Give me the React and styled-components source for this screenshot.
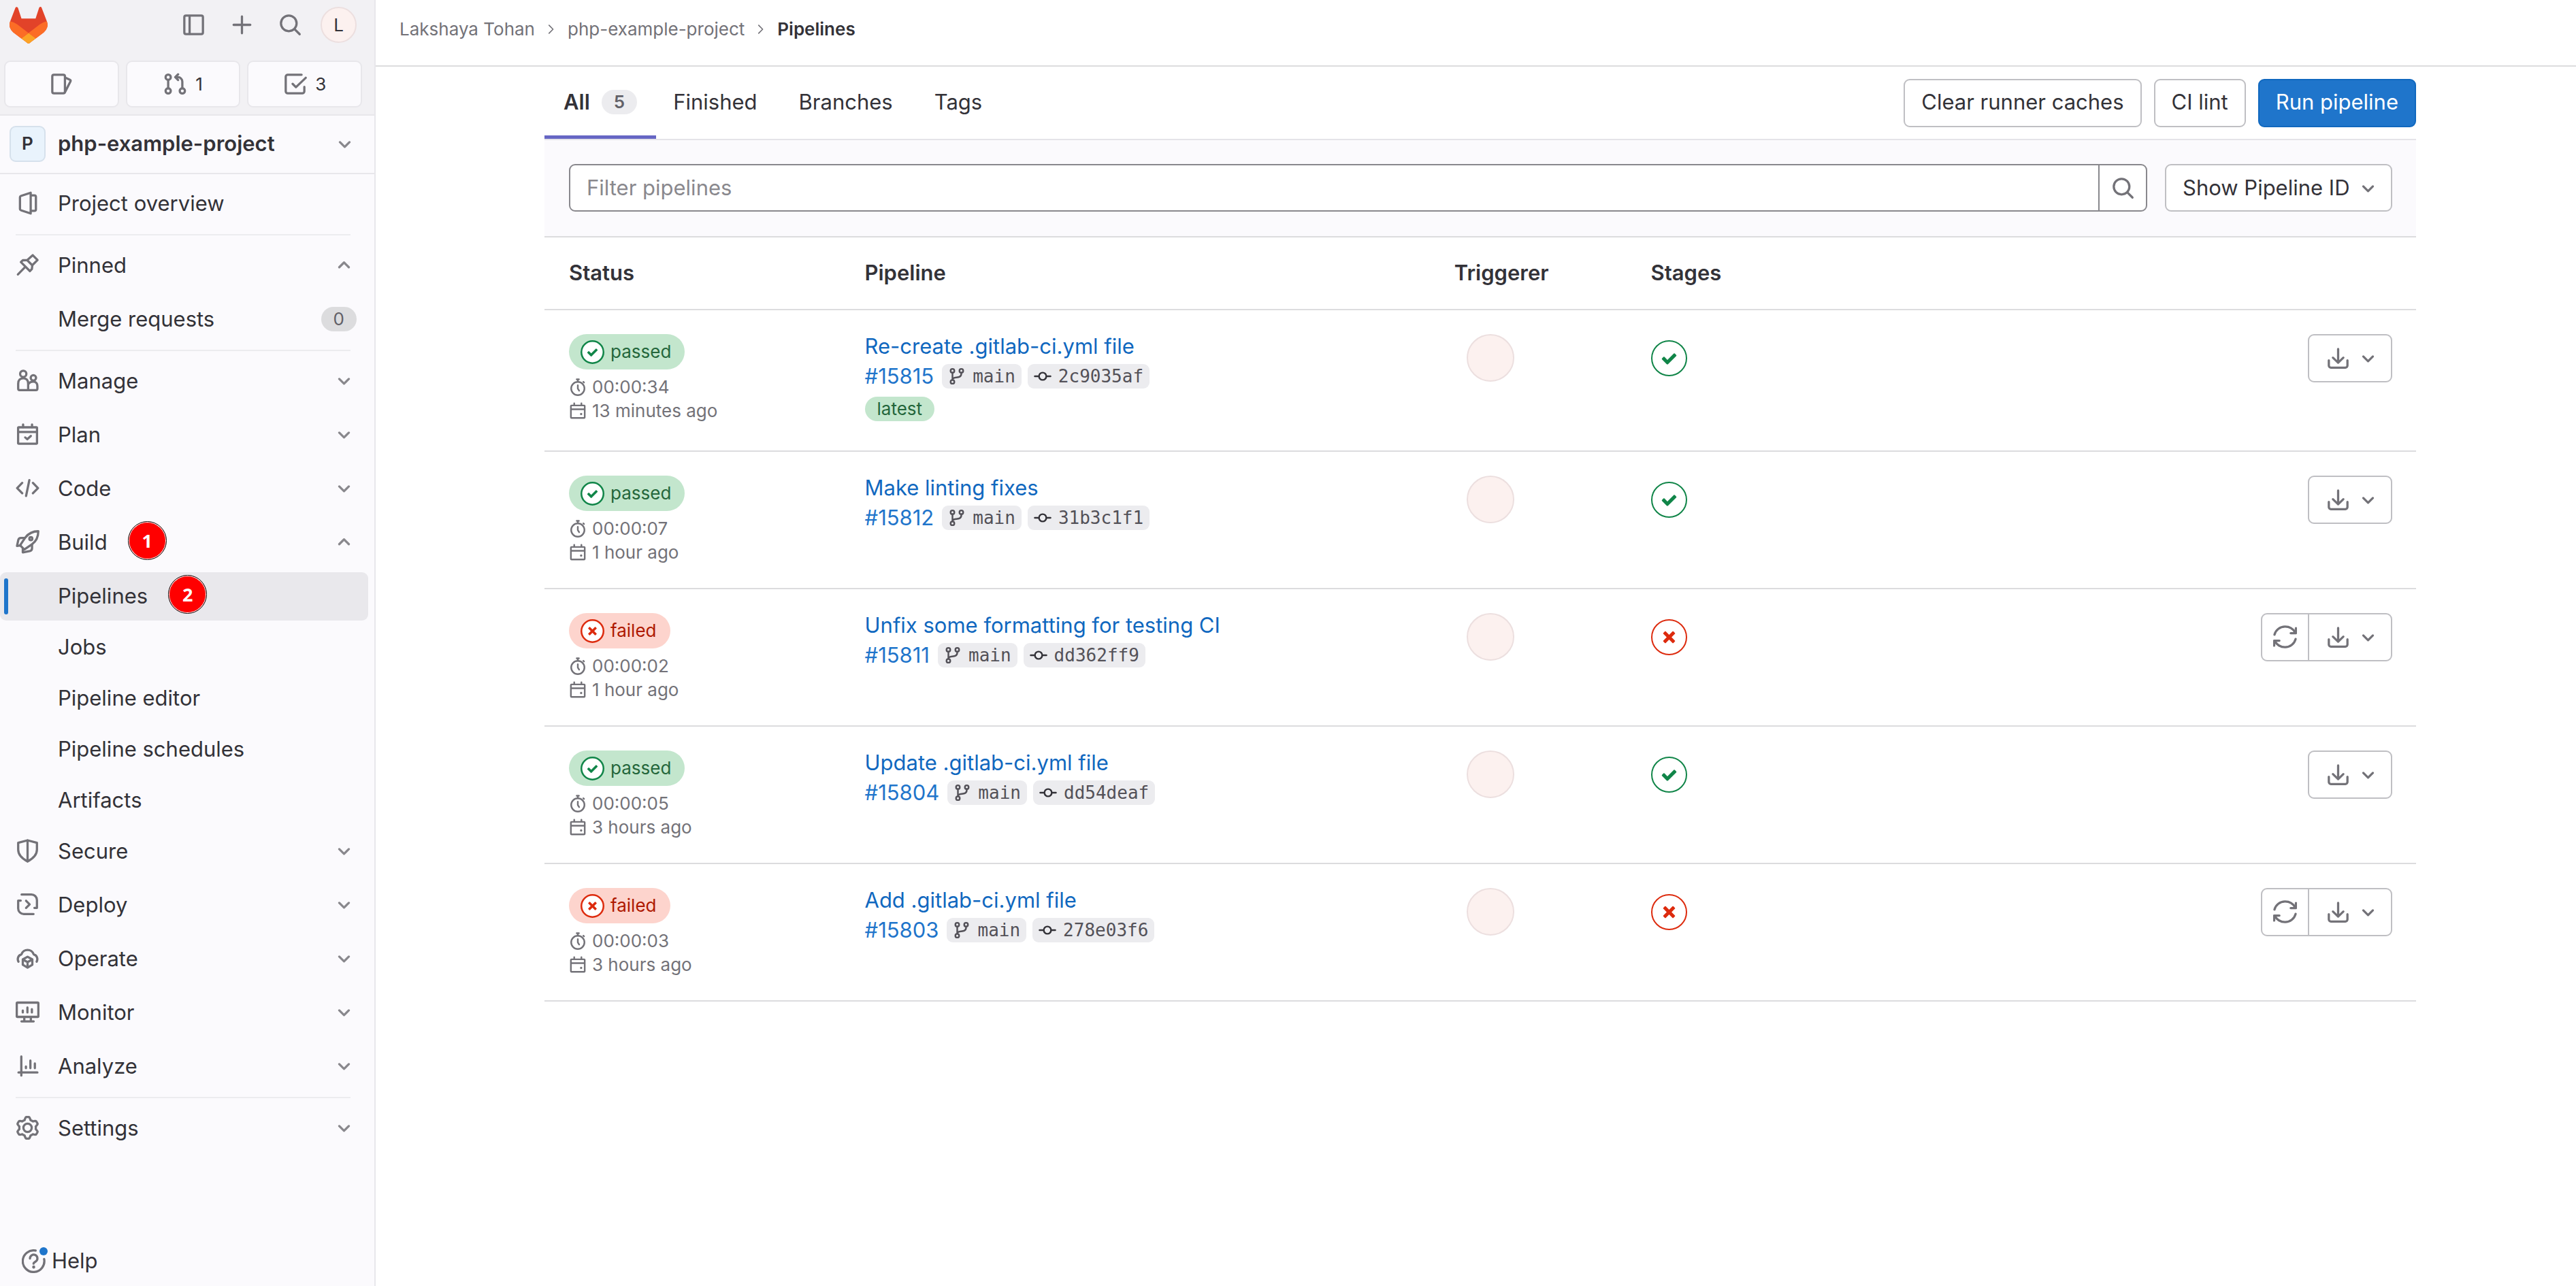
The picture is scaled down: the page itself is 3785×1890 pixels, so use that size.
import React from "react";
import styled, { createGlobalStyle, css } from "styled-components";

const GlobalStyle = createGlobalStyle`
  *, *::before, *::after { box-sizing: border-box; }
  body {
    margin: 0;
    background: #fff;
    color: #333238;
    font-family: Inter, "Open Sans", sans-serif;
    font-size: 31px;
    line-height: 36px;
  }
  button, input, select { font: inherit; color: inherit; margin: 0; }
  button, select { cursor: pointer; }
  a { text-decoration: none; }
  ul, ol { list-style: none; margin: 0; padding: 0; }
`;

/* ---------- Icons ---------- */

const Svg = styled.svg`
  display: block;
  flex: none;
  width: ${(p) => p.$size || 35}px;
  height: ${(p) => p.$size || 35}px;
  color: ${(p) => p.$color || "#737278"};
  fill: none;
  stroke: currentColor;
  stroke-width: ${(p) => p.$stroke || 1.5};
  stroke-linecap: round;
  stroke-linejoin: round;
`;

const gear = Array.from({ length: 120 }, (_, i) => {
  const a = (i / 120) * Math.PI * 2;
  const wave = Math.max(-1, Math.min(1, 1.7 * Math.cos(6 * a)));
  const r = 6.4 + 0.85 * wave;
  return `${(8 + r * Math.sin(a)).toFixed(2)} ${(8 - r * Math.cos(a)).toFixed(2)}`;
}).join("L");

const shapes = {
  sidebar: <><rect x="1.75" y="1.75" width="12.5" height="12.5" rx="1.1" /><path d="M5.3 2v12" /></>,
  plus: <path d="M8 2.4v11.2M2.4 8h11.2" />,
  search: <><circle cx="7" cy="7" r="5.25" /><path d="M10.9 10.9l3.4 3.4" /></>,
  issues: <><rect x="1.75" y="1.75" width="8.5" height="12.5" rx="1.1" /><path d="M10.4 3.7l3.2 1.4a.8.8 0 0 1 .4 1.1l-3.6 7" /></>,
  merge: <><circle cx="3.25" cy="3.4" r="1.75" /><circle cx="3.25" cy="12.6" r="1.75" /><circle cx="12.75" cy="12.6" r="1.75" /><path d="M3.25 5.2v5.6M12.75 10.8V6.4a3 3 0 0 0-3-3H8.2M9.9 1.5L8 3.4l1.9 1.9" /></>,
  todo: <><path d="M12.4 1.75H3.1c-.7 0-1.35.6-1.35 1.35v9.8c0 .7.6 1.35 1.35 1.35h9.8c.7 0 1.35-.6 1.35-1.35v-3" /><path d="M6.4 7.9l2.2 2.2 6.6-6.3" /></>,
  project: <><path d="M10.1 1L3.5 3.2a.9.9 0 0 0-.6.8v8c0 .4.2.7.6.8l6.6 2.2z" /><path d="M10.3 2.8h2.3a1 1 0 0 1 1 1v8.4a1 1 0 0 1-1 1h-2.3" /></>,
  pin: <><path d="M11.5 1.4l3.2 3.2-3.5 3.5-.3 2.6-1.3 1.4L3.5 6l1.3-1.2 3-.1z" /><path d="M7.9 4.9L11 8M6.4 9.3l-4.9 5" /></>,
  users: <><circle cx="5.1" cy="3.4" r="2.1" /><path d="M5.1 6.3c2.1 0 3.3 1.4 3.3 3.6v4.4H2.6c-.6 0-.9-.3-.9-.9V9.9c0-2.2 1.3-3.6 3.4-3.6z" /><circle cx="11.9" cy="6.1" r="1.8" /><path d="M8.9 9.9c.5-.8 1.5-1.3 2.8-1.3 1.9 0 2.9 1.2 2.9 2.9v1.9c0 .6-.3.9-.9.9H8.6" /></>,
  calendar: <><rect x="1.65" y="3.2" width="12.7" height="11" rx=".5" /><path d="M1.8 6.3h12.4M5 1.3v1.8M11 1.3v1.8M6.4 10l1.4 1.2L10.2 9" /></>,
  code: <path d="M4.4 4.4L1 7.9l3.4 3.5M11.6 4.4L15 7.9l-3.4 3.5M9.2 2.6L7 13.2" />,
  rocket: <><path d="M15.2.8c-3.6 0-6.6 1.5-8.7 4.2L3 10.2l2.8 2.9L11 9.5c2.8-2 4.2-5 4.2-8.7z" /><path d="M6.3 5.3H3.5c-1 0-1.5.5-1.7 1.3L.9 10.7l2.4-.4M11 9.7v2.5c0 1-.6 1.7-1.5 1.9l-4.7.9V12.6" /><circle cx="10.2" cy="5.8" r="1" /></>,
  shield: <><path d="M8 .9l6.3 1.7v4.6c0 3.3-2.3 5.8-6.3 7.9-4-2.1-6.3-4.6-6.3-7.9V2.6z" /><path d="M8 1v14" /></>,
  deploy: <><path d="M4 1.2h6.6a3.7 3.7 0 0 1 3.7 3.7v5.3h-1.7" /><path d="M12 14.3H5.4a3.7 3.7 0 0 1-3.7-3.7V5.3h1.7" /><path d="M7 5.4l2.4 2.4L7 10.2" /></>,
  operate: <><path d="M1.9 10.2A3.3 3.3 0 0 1 3.9 5.3a4.3 4.3 0 0 1 8.2 0 3.3 3.3 0 0 1 2 4.9" /><path d="M8 6.9l3.2 1.8v3.6L8 14.2l-3.2-1.9V8.7zM4.9 8.8L8 10.5l3.1-1.7M8 10.5v3.5" /></>,
  monitor: <><rect x=".75" y="1.6" width="14.5" height="9.6" rx=".5" /><path d="M4.8 6.9v1.3M7.9 4.9v3.3M10.9 6v2.2M5.8 11.4v2.4M10.2 11.4v2.4M3.9 14.2h8.2" /></>,
  analyze: <path d="M3.8 1.7v12.8M1.9 12.4h12.7M6.9 8.4v1.1M9.9 4.4v5.1M12.9 6.4v3.1" />,
  settings: <><path d={`M${gear}Z`} /><circle cx="8" cy="8" r="2.8" /></>,
  help: <><path d="M9.3.9A7.25 7.25 0 1 0 15 6.6" /><path d="M5.5 6.2a2.5 2.5 0 1 1 3.9 2L8.3 9a.9.9 0 0 0-.4.7" /><path d="M8 11.9v.1" strokeWidth="2" /></>,
  down: <path d="M4.8 6.8L8 10l3.2-3.2" />,
  up: <path d="M4.8 9.5L8 6.3l3.2 3.2" />,
  crumb: <path d="M6 4.4L9.6 8 6 11.6" />,
  timer: <><circle cx="8" cy="9.2" r="6" /><path d="M7 .9h2M8 1v2M13 3.2l.6.6M8 6.3v3l1.2 1.9" /></>,
  date: <><rect x="1.75" y="3" width="12.5" height="11.3" rx=".6" /><path d="M2 6.5h12M4.75 1v2M11.25 1v2" /><path d="M11 10.7v.1" strokeWidth="2" /></>,
  branch: <><circle cx="4" cy="3" r="1.7" /><circle cx="12" cy="3" r="1.7" /><circle cx="4" cy="13" r="1.7" /><path d="M4 4.8v6.4M12 4.8v.7c0 3.2-2.4 3.4-4.5 3.6C5.6 9.3 4 9.6 4 11" /></>,
  commit: <><circle cx="8" cy="8" r="3.3" /><path d="M.9 8h3.5M11.6 8h3.5" /></>,
  retry: <><path d="M.9 6.3C1.7 3.1 4.6.9 8 .9c2.9 0 5.5 1.6 6.8 4" /><path d="M15.3 1.9v3.4h-3.5" /><path d="M15.1 9.2c-.8 3.2-3.7 5.5-7.1 5.5-2.9 0-5.5-1.6-6.8-4" /><path d="M.7 13.7v-3.4h3.5" /></>,
  download: <path d="M8 1.8v9M4.5 7.6L8 11l3.5-3.4M1.75 9.4v3.5c0 .8.6 1.4 1.4 1.4h9.7c.8 0 1.4-.6 1.4-1.4V9.4" />,
};

const Icon = ({ name, size, color, stroke }) => (
  <Svg viewBox="0 0 16 16" aria-hidden="true" $size={size} $color={color} $stroke={stroke}>
    {shapes[name]}
  </Svg>
);

const marks = {
  passed:
    "M6.278 7.697L5.045 6.464a.296.296 0 0 0-.42-.002l-.613.614a.298.298 0 0 0 .002.42l1.91 1.909a.5.5 0 0 0 .703.005l.265-.265L9.997 6.04a.291.291 0 0 0-.009-.408l-.614-.614a.29.29 0 0 0-.408-.009L6.278 7.697z",
  failed:
    "M7 5.969L5.599 4.568a.29.29 0 0 0-.413.004l-.614.614a.294.294 0 0 0-.004.413L5.968 7l-1.4 1.401a.29.29 0 0 0 .004.413l.614.614c.113.114.3.117.413.004L7 8.032l1.401 1.4a.29.29 0 0 0 .413-.004l.614-.614a.294.294 0 0 0 .004-.413L8.032 7l1.4-1.401a.29.29 0 0 0-.004-.413l-.614-.614a.294.294 0 0 0-.413-.004L7 5.968z",
};
const tones = {
  passed: { line: "#108548", fill: "#c3e6cd", text: "#24663b" },
  failed: { line: "#dd2b0e", fill: "#fdd4cd", text: "#ae1800" },
};

const MarkSvg = styled.svg`
  display: block;
  flex: none;
  width: ${(p) => p.$size}px;
  height: ${(p) => p.$size}px;
`;

const StatusMark = ({ status, size, ring }) => (
  <MarkSvg viewBox="0 0 14 14" aria-hidden="true" $size={size}>
    {ring && <circle cx="7" cy="7" r="6.5" fill="#fff" stroke={tones[status].line} />}
    <path d={marks[status]} fill={tones[status].line} />
  </MarkSvg>
);

const LogoSvg = styled.svg`
  display: block;
  width: 56px;
  height: 54px;
`;

const Logo = () => (
  <LogoSvg viewBox="0 0 25 24" role="img" aria-label="GitLab">
    <path fill="#E24329" d="m24.507 9.5-.034-.09L21.082.562a.896.896 0 0 0-1.694.091l-2.29 7.01H7.825L5.535.653a.898.898 0 0 0-1.694-.09L.451 9.411.416 9.5a6.297 6.297 0 0 0 2.09 7.278l.012.01.03.022 5.16 3.867 2.56 1.935 1.554 1.176a1.051 1.051 0 0 0 1.268 0l1.555-1.176 2.56-1.935 5.197-3.89.014-.01A6.297 6.297 0 0 0 24.507 9.5Z" />
    <path fill="#FC6D26" d="m24.507 9.5-.034-.09a11.44 11.44 0 0 0-4.56 2.051l-7.447 5.632 4.742 3.584 5.197-3.89.014-.01A6.297 6.297 0 0 0 24.507 9.5Z" />
    <path fill="#FCA326" d="m7.707 20.677 2.56 1.935 1.555 1.176a1.051 1.051 0 0 0 1.268 0l1.555-1.176 2.56-1.935-4.743-3.584-4.755 3.584Z" />
    <path fill="#FC6D26" d="M5.01 11.461a11.43 11.43 0 0 0-4.56-2.05L.416 9.5a6.297 6.297 0 0 0 2.09 7.278l.012.01.03.022 5.16 3.867 4.745-3.584-7.444-5.632Z" />
  </LogoSvg>
);

/* ---------- Frame ---------- */

const Page = styled.div`
  display: flex;
  min-height: 100vh;
`;

const Sidebar = styled.aside`
  display: flex;
  flex-direction: column;
  flex: none;
  width: 552px;
  background: #fbfafd;
  border-right: 2px solid #e8e7eb;
`;

const Main = styled.main`
  flex: 1;
  min-width: 0;
`;

/* ---------- Sidebar header ---------- */

const SidebarTop = styled.header`
  background: #f2f1f4;
  border-bottom: 2px solid #e8e7eb;
`;

const BrandRow = styled.div`
  display: flex;
  justify-content: space-between;
  align-items: center;
  height: 73px;
  padding: 0 17px 0 14px;
`;

const Tools = styled.div`
  display: flex;
`;

const IconButton = styled.button`
  display: flex;
  align-items: center;
  justify-content: center;
  width: 71px;
  height: 71px;
  padding: 0;
  border: 0;
  background: none;
`;

const avatarBase = css`
  display: flex;
  align-items: center;
  justify-content: center;
  font-size: 26px;
  line-height: 26px;
`;

const UserAvatar = styled.span`
  ${avatarBase}
  width: ${(p) => p.$size}px;
  height: ${(p) => p.$size}px;
  border-radius: 50%;
  border: 2px solid #ecdfdf;
  background: #fcf1ef;
`;

const ProjectAvatar = styled.span`
  ${avatarBase}
  flex: none;
  width: 53px;
  height: 53px;
  border-radius: 9px;
  border: 2px solid #d6e1ec;
  background: #e9f3fc;
  font-weight: 600;
`;

const Counters = styled.div`
  display: flex;
  gap: 10px;
  padding: 16px 18px 10px 6px;
`;

const Counter = styled.a`
  display: flex;
  flex: 1;
  align-items: center;
  justify-content: center;
  gap: 12px;
  height: 69px;
  border: 2px solid #e8e7eb;
  border-radius: 9px;
  background: #fbfafd;
  color: #333238;
  font-size: 26px;
`;

const ProjectButton = styled.button`
  display: flex;
  align-items: center;
  gap: 18px;
  width: 100%;
  height: 86px;
  padding: 0 26px 2px 14px;
  border: 0;
  border-bottom: 2px solid #e8e7eb;
  background: none;
  font-weight: 600;
  text-align: left;
`;

const Grow = styled.span`
  flex: 1;
`;

/* ---------- Sidebar navigation ---------- */

const Nav = styled.nav`
  flex: 1;
  padding-top: 8px;
`;

const rowBase = css`
  display: flex;
  align-items: center;
  width: 100%;
  height: 71px;
  padding: 0 27px 2px 23px;
  border: 0;
  background: none;
  color: #333238;
  text-align: left;
`;

const SectionButton = styled.button`
  ${rowBase}
  gap: 27px;
  margin-bottom: 8px;
`;

const SectionLink = styled.a`
  ${rowBase}
  gap: 27px;
`;

const SubItem = styled.li`
  margin-bottom: 4px;
  padding-right: 9px;
`;

const SubLink = styled.a`
  ${rowBase}
  position: relative;
  padding: 0 17px 2px 85px;
  border-radius: 9px;
  ${(p) =>
    p.$active &&
    css`
      background: #e9e8ec;
      &::before {
        content: "";
        position: absolute;
        left: 6px;
        top: 9px;
        width: 6px;
        height: 53px;
        border-radius: 3px;
        background: #1f75cb;
      }
    `}
`;

const Rule = styled.hr`
  height: 2px;
  margin: 9px 35px 9px 23px;
  border: 0;
  background: #ececef;
`;

const Pill = styled.span`
  display: flex;
  align-items: center;
  justify-content: center;
  min-width: 52px;
  height: 36px;
  padding: 0 18px;
  border-radius: 18px;
  background: ${(p) => p.$fill};
  color: ${(p) => p.$text};
  font-size: 26px;
  font-weight: ${(p) => p.$weight || 400};
  line-height: 36px;
`;

const Callout = styled.span`
  display: flex;
  align-items: center;
  justify-content: center;
  width: 57px;
  height: 57px;
  margin: 0 0 4px 30px;
  border: 1px solid #111;
  border-radius: 50%;
  box-shadow: inset 0 0 0 1px #fff;
  background: #f00;
  color: #fff;
  font: 700 27px/30px "Noto Sans", sans-serif;
`;

const LabelGroup = styled.span`
  display: flex;
  align-items: center;
  flex: 1;
`;

const HelpButton = styled.button`
  display: flex;
  align-items: center;
  gap: 9px;
  height: 72px;
  padding: 0 32px 2px;
  border: 0;
  background: none;
`;

const HelpIcon = styled.span`
  position: relative;
  &::after {
    content: "";
    position: absolute;
    top: -3px;
    right: -3px;
    width: 12px;
    height: 12px;
    border-radius: 50%;
    background: #1f75cb;
  }
`;

/* ---------- Main header ---------- */

const TopBar = styled.nav`
  height: 98px;
  padding: 25px 35px 0;
  border-bottom: 2px solid #dcdcde;
`;

const Crumbs = styled.ol`
  display: flex;
  align-items: center;
  font-size: 26px;
`;

const Crumb = styled.li`
  display: flex;
  align-items: center;
  a { color: ${(p) => (p.$current ? "#333238" : "#737278")}; font-weight: ${(p) => (p.$current ? 600 : 400)}; }
  svg { margin: 0 11px; }
`;

const Content = styled.div`
  padding: 0 32px 0 45px;
`;

const Container = styled.div`
  max-width: 2750px;
  margin: 0 auto;
`;

const TabRow = styled.div`
  display: flex;
  justify-content: space-between;
  align-items: center;
  border-bottom: 2px solid #e4e3e8;
`;

const Tabs = styled.div`
  display: flex;
`;

const Tab = styled.button`
  display: flex;
  align-items: center;
  gap: 17px;
  height: 106px;
  padding: ${(p) => (p.$active ? "0 28px 2px" : "0 36px 2px 25px")};
  border: 0;
  background: none;
  font-weight: ${(p) => (p.$active ? 600 : 400)};
  box-shadow: ${(p) => (p.$active ? "inset 0 -5px 0 #6666c4" : "none")};
`;

const Actions = styled.div`
  display: flex;
  gap: 18px;
`;

const Button = styled.button`
  height: 71px;
  padding: 0 24px 2px;
  border: 2px solid ${(p) => (p.$primary ? "#1068bf" : "#bfbfc3")};
  border-radius: 9px;
  background: ${(p) => (p.$primary ? "#1f75cb" : "#fff")};
  color: ${(p) => (p.$primary ? "#fff" : "#333238")};
`;

/* ---------- Filter bar ---------- */

const FilterBar = styled.form`
  display: flex;
  gap: 26px;
  padding: 35px 35px 36px 36px;
  border-bottom: 2px solid #dcdcde;
  background: #fbfafd;
`;

const SearchBox = styled.div`
  display: flex;
  flex: 1;
  height: 70px;
  border: 2px solid #89888d;
  border-radius: 9px;
  background: #fff;
  overflow: hidden;
`;

const SearchInput = styled.input`
  flex: 1;
  min-width: 0;
  padding: 0 24px;
  border: 0;
  outline: 0;
  background: none;
  &::placeholder { color: #89888d; opacity: 1; }
`;

const SearchButton = styled.button`
  display: flex;
  align-items: center;
  justify-content: center;
  width: 70px;
  padding: 0;
  border: 0;
  border-left: 2px solid #89888d;
  background: none;
`;

const SelectWrap = styled.div`
  position: relative;
  svg { position: absolute; right: 18px; top: 18px; pointer-events: none; }
`;

const Select = styled.select`
  appearance: none;
  height: 70px;
  padding: 0 60px 0 24px;
  border: 2px solid #bfbfc3;
  border-radius: 9px;
  background: #fff;
`;

/* ---------- Table ---------- */

const Table = styled.table`
  width: 100%;
  table-layout: fixed;
  border-collapse: separate;
  border-spacing: 0;
`;

const Col = styled.col`
  width: ${(p) => p.$width};
`;

const Th = styled.th`
  height: 107px;
  padding: 0 36px 2px;
  border-bottom: 2px solid #dcdcde;
  font-weight: 600;
  text-align: left;
`;

const Td = styled.td`
  padding: 35px 35px 35px 36px;
  border-bottom: 2px solid #dcdcde;
  vertical-align: top;
`;

const StatusBadge = styled.span`
  display: inline-flex;
  align-items: center;
  gap: 9px;
  height: 52px;
  padding: 0 20px 0 17px;
  border-radius: 26px;
  background: ${(p) => tones[p.$status].fill};
  color: ${(p) => tones[p.$status].text};
  font-size: 26px;
  vertical-align: top;
`;

const Meta = styled.div`
  margin-top: 8px;
`;

const MetaLine = styled.div`
  display: flex;
  align-items: center;
  gap: 8px;
  height: 35px;
  color: #737278;
  font-size: 26px;
  line-height: 35px;
`;

const Title = styled.a`
  display: block;
  color: #1068bf;
`;

const RefLine = styled.div`
  display: flex;
  align-items: center;
  gap: 9px;
  margin-top: 8px;
`;

const PipelineId = styled.a`
  margin-right: 3px;
  color: #1f75cb;
`;

const Chip = styled.a`
  display: flex;
  align-items: center;
  gap: 10px;
  height: 36px;
  padding: 0 9px;
  border-radius: 9px;
  background: #ececef;
  color: #535158;
  font-family: "DejaVu Sans Mono", "Liberation Mono", monospace;
  font-size: 26px;
`;

const Labels = styled.div`
  display: flex;
  margin: 12px 0 8px;
`;

const AvatarLink = styled.a`
  display: inline-block;
  margin-left: 18px;
  vertical-align: top;
`;

const StageButton = styled.button`
  display: flex;
  align-items: center;
  justify-content: center;
  width: 53px;
  height: 53px;
  margin-top: 9px;
  padding: 0;
  border: 2px solid ${(p) => tones[p.$status].line};
  border-radius: 50%;
  background: #fff;
`;

const ButtonGroup = styled.div`
  display: flex;
  justify-content: flex-end;
`;

const GroupButton = styled.button`
  display: flex;
  align-items: center;
  gap: 9px;
  height: 71px;
  padding: ${(p) => (p.$menu ? "0 16px 0 25px" : "0 16px")};
  border: 2px solid #bfbfc3;
  border-radius: 9px;
  background: #fff;
  &:not(:last-child) { margin-right: -2px; border-top-right-radius: 0; border-bottom-right-radius: 0; }
  &:not(:first-child) { border-top-left-radius: 0; border-bottom-left-radius: 0; }
`;

/* ---------- Data ---------- */

const pipelines = [
  { id: "#15815", title: "Re-create .gitlab-ci.yml file", sha: "2c9035af", status: "passed", time: "00:00:34", ago: "13 minutes ago", latest: true },
  { id: "#15812", title: "Make linting fixes", sha: "31b3c1f1", status: "passed", time: "00:00:07", ago: "1 hour ago" },
  { id: "#15811", title: "Unfix some formatting for testing CI", sha: "dd362ff9", status: "failed", time: "00:00:02", ago: "1 hour ago" },
  { id: "#15804", title: "Update .gitlab-ci.yml file", sha: "dd54deaf", status: "passed", time: "00:00:05", ago: "3 hours ago" },
  { id: "#15803", title: "Add .gitlab-ci.yml file", sha: "278e03f6", status: "failed", time: "00:00:03", ago: "3 hours ago" },
];

const Section = ({ icon, label, open, callout }) => (
  <SectionButton type="button" aria-expanded={!!open}>
    <Icon name={icon} />
    <LabelGroup>
      {label}
      {callout && <Callout>{callout}</Callout>}
    </LabelGroup>
    <Icon name={open ? "up" : "down"} color="#89888d" />
  </SectionButton>
);

const PipelineRow = ({ p }) => (
  <tr>
    <Td>
      <StatusBadge $status={p.status}>
        <StatusMark status={p.status} size={35} ring />
        {p.status}
      </StatusBadge>
      <Meta>
        <MetaLine><Icon name="timer" size={26} />{p.time}</MetaLine>
        <MetaLine><Icon name="date" size={26} />{p.ago}</MetaLine>
      </Meta>
    </Td>
    <Td>
      <Title href="#">{p.title}</Title>
      <RefLine>
        <PipelineId href="#">{p.id}</PipelineId>
        <Chip href="#"><Icon name="branch" size={26} color="#535158" />main</Chip>
        <Chip href="#"><Icon name="commit" size={26} color="#333238" />{p.sha}</Chip>
      </RefLine>
      {p.latest && (
        <Labels><Pill $fill="#c3e6cd" $text="#24663b">latest</Pill></Labels>
      )}
    </Td>
    <Td><AvatarLink href="#" aria-label="Triggerer"><UserAvatar $size={70} /></AvatarLink></Td>
    <Td>
      <StageButton type="button" $status={p.status} aria-label={`Stage: ${p.status}`}>
        <StatusMark status={p.status} size={49} />
      </StageButton>
    </Td>
    <Td>
      <ButtonGroup>
        {p.status === "failed" && (
          <GroupButton type="button" aria-label="Retry"><Icon name="retry" /></GroupButton>
        )}
        <GroupButton type="button" $menu aria-label="Download artifacts">
          <Icon name="download" /><Icon name="down" />
        </GroupButton>
      </ButtonGroup>
    </Td>
  </tr>
);

export default function App() {
  return (
    <Page>
      <GlobalStyle />
      <Sidebar>
        <SidebarTop>
          <BrandRow>
            <a href="#"><Logo /></a>
            <Tools>
              <IconButton type="button" aria-label="Toggle sidebar"><Icon name="sidebar" /></IconButton>
              <IconButton type="button" aria-label="Create new"><Icon name="plus" /></IconButton>
              <IconButton type="button" aria-label="Search"><Icon name="search" /></IconButton>
              <IconButton type="button" aria-label="User menu"><UserAvatar $size={53}>L</UserAvatar></IconButton>
            </Tools>
          </BrandRow>
          <Counters>
            <Counter href="#" aria-label="Issues"><Icon name="issues" /></Counter>
            <Counter href="#"><Icon name="merge" />1</Counter>
            <Counter href="#"><Icon name="todo" />3</Counter>
          </Counters>
        </SidebarTop>
        <ProjectButton type="button">
          <ProjectAvatar>P</ProjectAvatar>
          <Grow>php-example-project</Grow>
          <Icon name="down" color="#89888d" />
        </ProjectButton>
        <Nav>
          <SectionLink href="#"><Icon name="project" />Project overview</SectionLink>
          <Rule />
          <Section icon="pin" label="Pinned" open />
          <ul>
            <SubItem>
              <SubLink href="#"><Grow>Merge requests</Grow><Pill $fill="#dcdcde" $text="#626168">0</Pill></SubLink>
            </SubItem>
          </ul>
          <Rule />
          <Section icon="users" label="Manage" />
          <Section icon="calendar" label="Plan" />
          <Section icon="code" label="Code" />
          <Section icon="rocket" label="Build" open callout="1" />
          <ul>
            <SubItem><SubLink href="#" $active aria-current="page">Pipelines<Callout>2</Callout></SubLink></SubItem>
            {["Jobs", "Pipeline editor", "Pipeline schedules", "Artifacts"].map((label) => (
              <SubItem key={label}><SubLink href="#">{label}</SubLink></SubItem>
            ))}
          </ul>
          <Section icon="shield" label="Secure" />
          <Section icon="deploy" label="Deploy" />
          <Section icon="operate" label="Operate" />
          <Section icon="monitor" label="Monitor" />
          <Section icon="analyze" label="Analyze" />
          <Rule />
          <Section icon="settings" label="Settings" />
        </Nav>
        <HelpButton type="button"><HelpIcon><Icon name="help" /></HelpIcon>Help</HelpButton>
      </Sidebar>

      <Main>
        <TopBar aria-label="Breadcrumb">
          <Crumbs>
            <Crumb><a href="#">Lakshaya Tohan</a><Icon name="crumb" size={26} stroke={1} /></Crumb>
            <Crumb><a href="#">php-example-project</a><Icon name="crumb" size={26} stroke={1} /></Crumb>
            <Crumb $current><a href="#">Pipelines</a></Crumb>
          </Crumbs>
        </TopBar>
        <Content>
          <Container>
            <TabRow>
              <Tabs role="tablist">
                <Tab type="button" role="tab" aria-selected="true" $active>
                  All<Pill $fill="#ececef" $text="#626168" $weight={600}>5</Pill>
                </Tab>
                <Tab type="button" role="tab">Finished</Tab>
                <Tab type="button" role="tab">Branches</Tab>
                <Tab type="button" role="tab">Tags</Tab>
              </Tabs>
              <Actions>
                <Button type="button">Clear runner caches</Button>
                <Button type="button">CI lint</Button>
                <Button type="button" $primary>Run pipeline</Button>
              </Actions>
            </TabRow>
            <FilterBar onSubmit={(e) => e.preventDefault()}>
              <SearchBox>
                <SearchInput type="text" placeholder="Filter pipelines" aria-label="Filter pipelines" />
                <SearchButton type="submit" aria-label="Search"><Icon name="search" /></SearchButton>
              </SearchBox>
              <SelectWrap>
                <Select aria-label="Pipeline identifier" defaultValue="id">
                  <option value="id">Show Pipeline ID</option>
                </Select>
                <Icon name="down" />
              </SelectWrap>
            </FilterBar>
            <Table>
              <colgroup>
                <Col $width="15.8%" />
                <Col $width="31.5%" />
                <Col $width="10.5%" />
                <Col $width="26.4%" />
                <Col $width="15.8%" />
              </colgroup>
              <thead>
                <tr>
                  <Th scope="col">Status</Th>
                  <Th scope="col">Pipeline</Th>
                  <Th scope="col">Triggerer</Th>
                  <Th scope="col">Stages</Th>
                  <Th scope="col" aria-label="Actions" />
                </tr>
              </thead>
              <tbody>
                {pipelines.map((p) => <PipelineRow key={p.id} p={p} />)}
              </tbody>
            </Table>
          </Container>
        </Content>
      </Main>
    </Page>
  );
}
